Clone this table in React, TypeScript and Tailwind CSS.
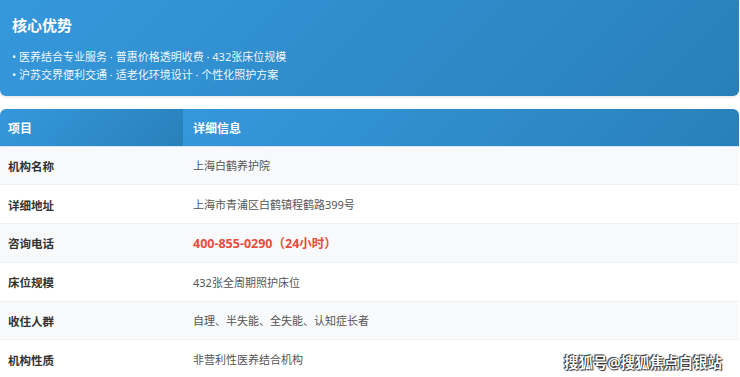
import React from "react";

const rows: { label: string; value: string; phone?: boolean }[] = [
  { label: "机构名称", value: "上海白鹤养护院" },
  { label: "详细地址", value: "上海市青浦区白鹤镇程鹤路399号" },
  { label: "咨询电话", value: "400-855-0290（24小时）", phone: true },
  { label: "床位规模", value: "432张全周期照护床位" },
  { label: "收住人群", value: "自理、半失能、全失能、认知症长者" },
  { label: "机构性质", value: "非营利性医养结合机构" },
];

export default function App() {
  return (
    <div
      className="relative w-[740px] h-[377px] overflow-hidden bg-white"
      style={{ fontFamily: '"Noto Sans", "Noto Sans CJK SC", sans-serif' }}
    >
      <div className="w-[739px] h-[96px] rounded-b-[6px] bg-[linear-gradient(135deg,#3598dc,#2980b9)] text-white pl-[12px] pt-[14px] shadow-[0_1px_3px_rgba(0,0,0,0.12)]">
        <div className="text-[15px] font-bold leading-[22px]">核心优势</div>
        <div className="mt-[12px] text-[11px] leading-[17.5px] text-white/95">
          <div>• 医养结合专业服务 · 普惠价格透明收费 · 432张床位规模</div>
          <div>• 沪苏交界便利交通 · 适老化环境设计 · 个性化照护方案</div>
        </div>
      </div>

      <div className="mt-[12.5px] w-[739px] rounded-t-[6px] overflow-hidden">
        <div className="flex h-[38px] border-b border-[#d6e6f3]">
          <div className="w-[183px] h-full flex items-center pl-[8px] pt-[3px] text-white font-bold text-[12px] bg-[linear-gradient(135deg,#3598dc,#2980b9)]">
            项目
          </div>
          <div className="flex-1 h-full flex items-center pl-[10px] pt-[3px] text-white font-bold text-[12px] bg-[linear-gradient(135deg,#3598dc,#2980b9)]">
            详细信息
          </div>
        </div>
        {rows.map((r, i) => (
          <div
            key={r.label}
            className={`flex h-[38.8px] border-b border-[#eef0f2] ${i % 2 === 0 ? "bg-[#f8f9fa]" : "bg-white"}`}
          >
            <div className="w-[183px] flex items-center pl-[8px] pt-[2px] text-[11.5px] font-bold text-[#333]">
              {r.label}
            </div>
            <div
              className={`flex-1 flex items-center pl-[10px] pt-[2px] ${
                r.phone ? "text-[12.5px] font-bold text-[#e74c3c]" : "text-[11px] text-[#555]"
              }`}
            >
              {r.value}
            </div>
          </div>
        ))}
      </div>

      <div className="absolute left-[564px] top-[352px] text-[14.5px] leading-[20px] text-white font-bold [text-shadow:0_0_1px_#000,1px_1px_1px_#333,-1px_-1px_1px_#333]">
        搜狐号@搜狐焦点白银站
      </div>
    </div>
  );
}
